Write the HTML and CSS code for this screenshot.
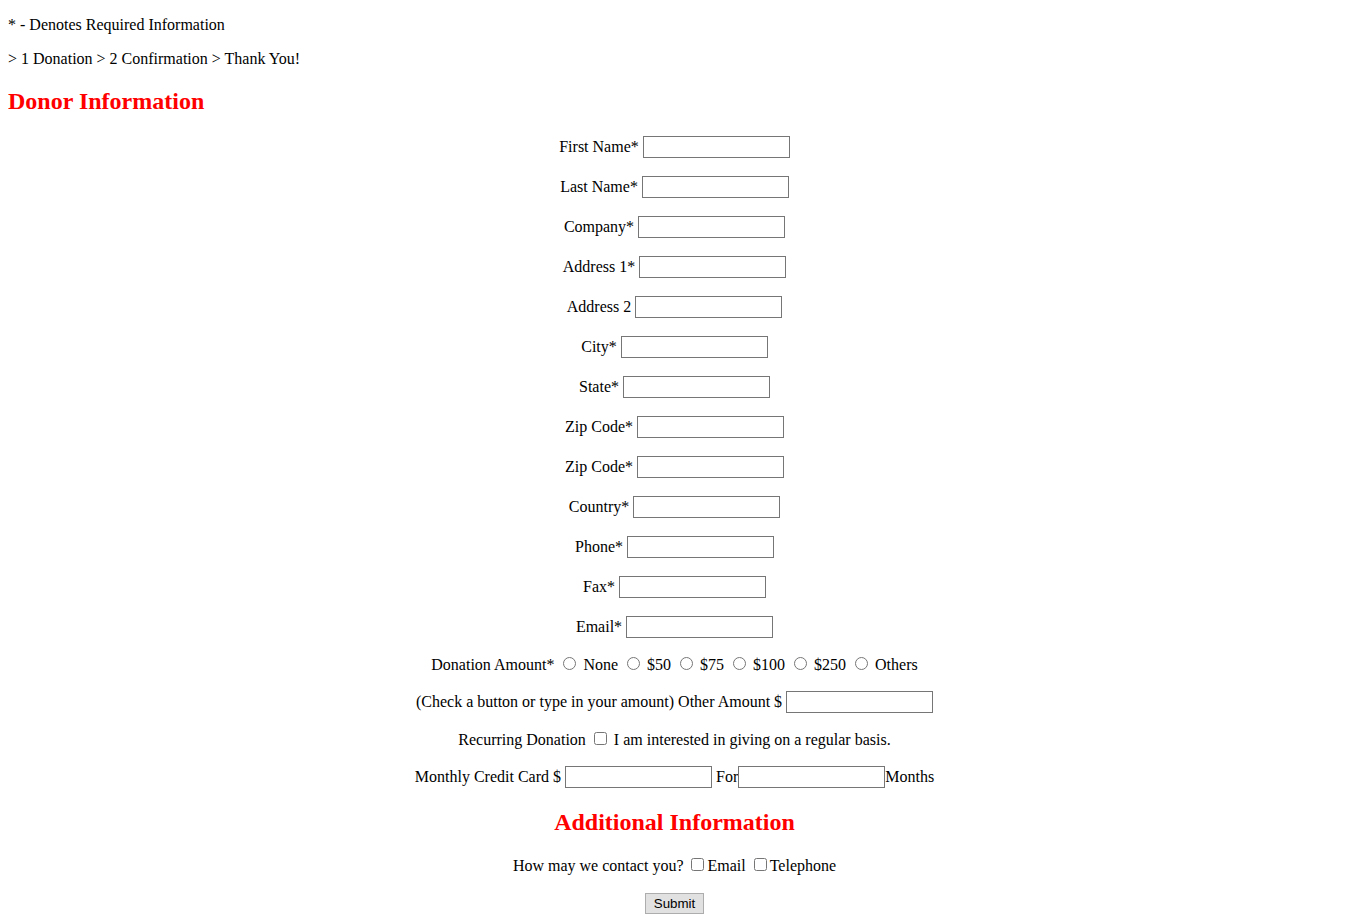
FILE: index.html
```html
<!DOCTYPE html>
<html>
<head>
<meta charset="utf-8">
<title>Donation</title>
<link rel="stylesheet" href="styles.css">
</head>
<body>
<p class="intro">* - Denotes Required Information</p>
<p>&gt; 1 Donation &gt; 2 Confirmation &gt; Thank You!</p>
<h2 class="heading">Donor Information</h2>
<form class="form">
<p class="row">First Name* <input class="field" type="text"></p>
<p class="row">Last Name* <input class="field" type="text"></p>
<p class="row">Company* <input class="field" type="text"></p>
<p class="row">Address 1* <input class="field" type="text"></p>
<p class="row">Address 2 <input class="field" type="text"></p>
<p class="row">City* <input class="field" type="text"></p>
<p class="row">State* <input class="field" type="text"></p>
<p class="row">Zip Code* <input class="field" type="text"></p>
<p class="row">Zip Code* <input class="field" type="text"></p>
<p class="row">Country* <input class="field" type="text"></p>
<p class="row">Phone* <input class="field" type="text"></p>
<p class="row">Fax* <input class="field" type="text"></p>
<p class="row">Email* <input class="field" type="text"></p>
<p class="row">Donation Amount* <input class="radio" type="radio" name="amt"> None <input class="radio" type="radio" name="amt"> $50 <input class="radio" type="radio" name="amt"> $75 <input class="radio" type="radio" name="amt"> $100 <input class="radio" type="radio" name="amt"> $250 <input class="radio" type="radio" name="amt"> Others</p>
<p class="row">(Check a button or type in your amount) Other Amount $ <input class="field" type="text"></p>
<p class="row">Recurring Donation <input class="check" type="checkbox"> I am interested in giving on a regular basis.</p>
<p class="row">Monthly Credit Card $ <input class="field" type="text"> For<input class="field" type="text">Months</p>
<h2 class="heading center">Additional Information</h2>
<p class="row">How may we contact you? <input class="check" type="checkbox">Email <input class="check" type="checkbox">Telephone</p>
<p class="row"><button class="submit" type="button">Submit</button></p>
</form>
</body>
</html>
```
FILE: styles.css
```css
html, body {
  background: #fff;
}
body {
  margin: 0 8px 8px;
  font-family: "Liberation Serif", "Times New Roman", serif;
  font-size: 16px;
  color: #000;
}
.intro {
  margin-top: 16px;
}
.heading {
  color: #ff0000;
  font-size: 24px;
  font-weight: bold;
  margin: 19.92px 0;
}
.center {
  text-align: center;
}
.form {
  margin: 0;
}
.row {
  text-align: center;
  margin: 16px 0;
}
.field {
  box-sizing: border-box;
  width: 147px;
  height: 22px;
  border: 1px solid #767676;
  padding: 1px 2px;
  font: 13.33px "Liberation Sans", Arial, sans-serif;
  background: #fff;
  margin: 1px 0;
  vertical-align: baseline;
}
.radio {
  margin: 2px 3px 0 5px;
  width: 13px;
  height: 13px;
}
.check {
  margin: 2px 3px 0 4px;
  width: 13px;
  height: 13px;
}
.submit {
  box-sizing: border-box;
  height: 21px;
  padding: 1px 8px;
  border: 1px solid #adadad;
  background: #e1e1e1;
  font: 13.33px "Liberation Sans", Arial, sans-serif;
  color: #000;
  margin: 2px 0;
}
```
